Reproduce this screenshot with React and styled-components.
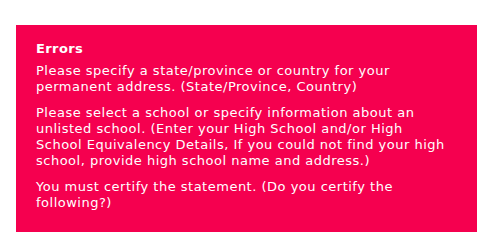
import React from "react";
import styled, { createGlobalStyle } from "styled-components";

const Global = createGlobalStyle`
  html, body { margin: 0; padding: 0; background: #ffffff; }
  body { font-family: "DejaVu Sans", Verdana, sans-serif; }
`;

const Page = styled.div`
  padding: 25px 23px 0 16px;
`;

const ErrorBox = styled.div`
  background: #f5004f;
  color: #ffffff;
  padding: 16px 20px 21px 20px;
  font-size: 13px;
  line-height: 16px;
  letter-spacing: 0.5px;
`;

const Title = styled.div`
  font-weight: bold;
  letter-spacing: 0.4px;
  margin-bottom: 6px;
`;

const Message = styled.p`
  margin: 0 0 10px 0;
  white-space: nowrap;
  &:last-child { margin-bottom: 0; }
`;

const messages = [
  [
    "Please specify a state/province or country for your",
    "permanent address. (State/Province, Country)",
  ],
  [
    "Please select a school or specify information about an",
    "unlisted school. (Enter your High School and/or High",
    "School Equivalency Details, If you could not find your high",
    "school, provide high school name and address.)",
  ],
  [
    "You must certify the statement. (Do you certify the",
    "following?)",
  ],
];

export default function App() {
  return (
    <>
      <Global />
      <Page>
        <ErrorBox>
          <Title>Errors</Title>
          {messages.map((lines, i) => (
            <Message key={i}>
              {lines.map((line, j) => (
                <React.Fragment key={j}>
                  {j > 0 && <br />}
                  {line}
                </React.Fragment>
              ))}
            </Message>
          ))}
        </ErrorBox>
      </Page>
    </>
  );
}
